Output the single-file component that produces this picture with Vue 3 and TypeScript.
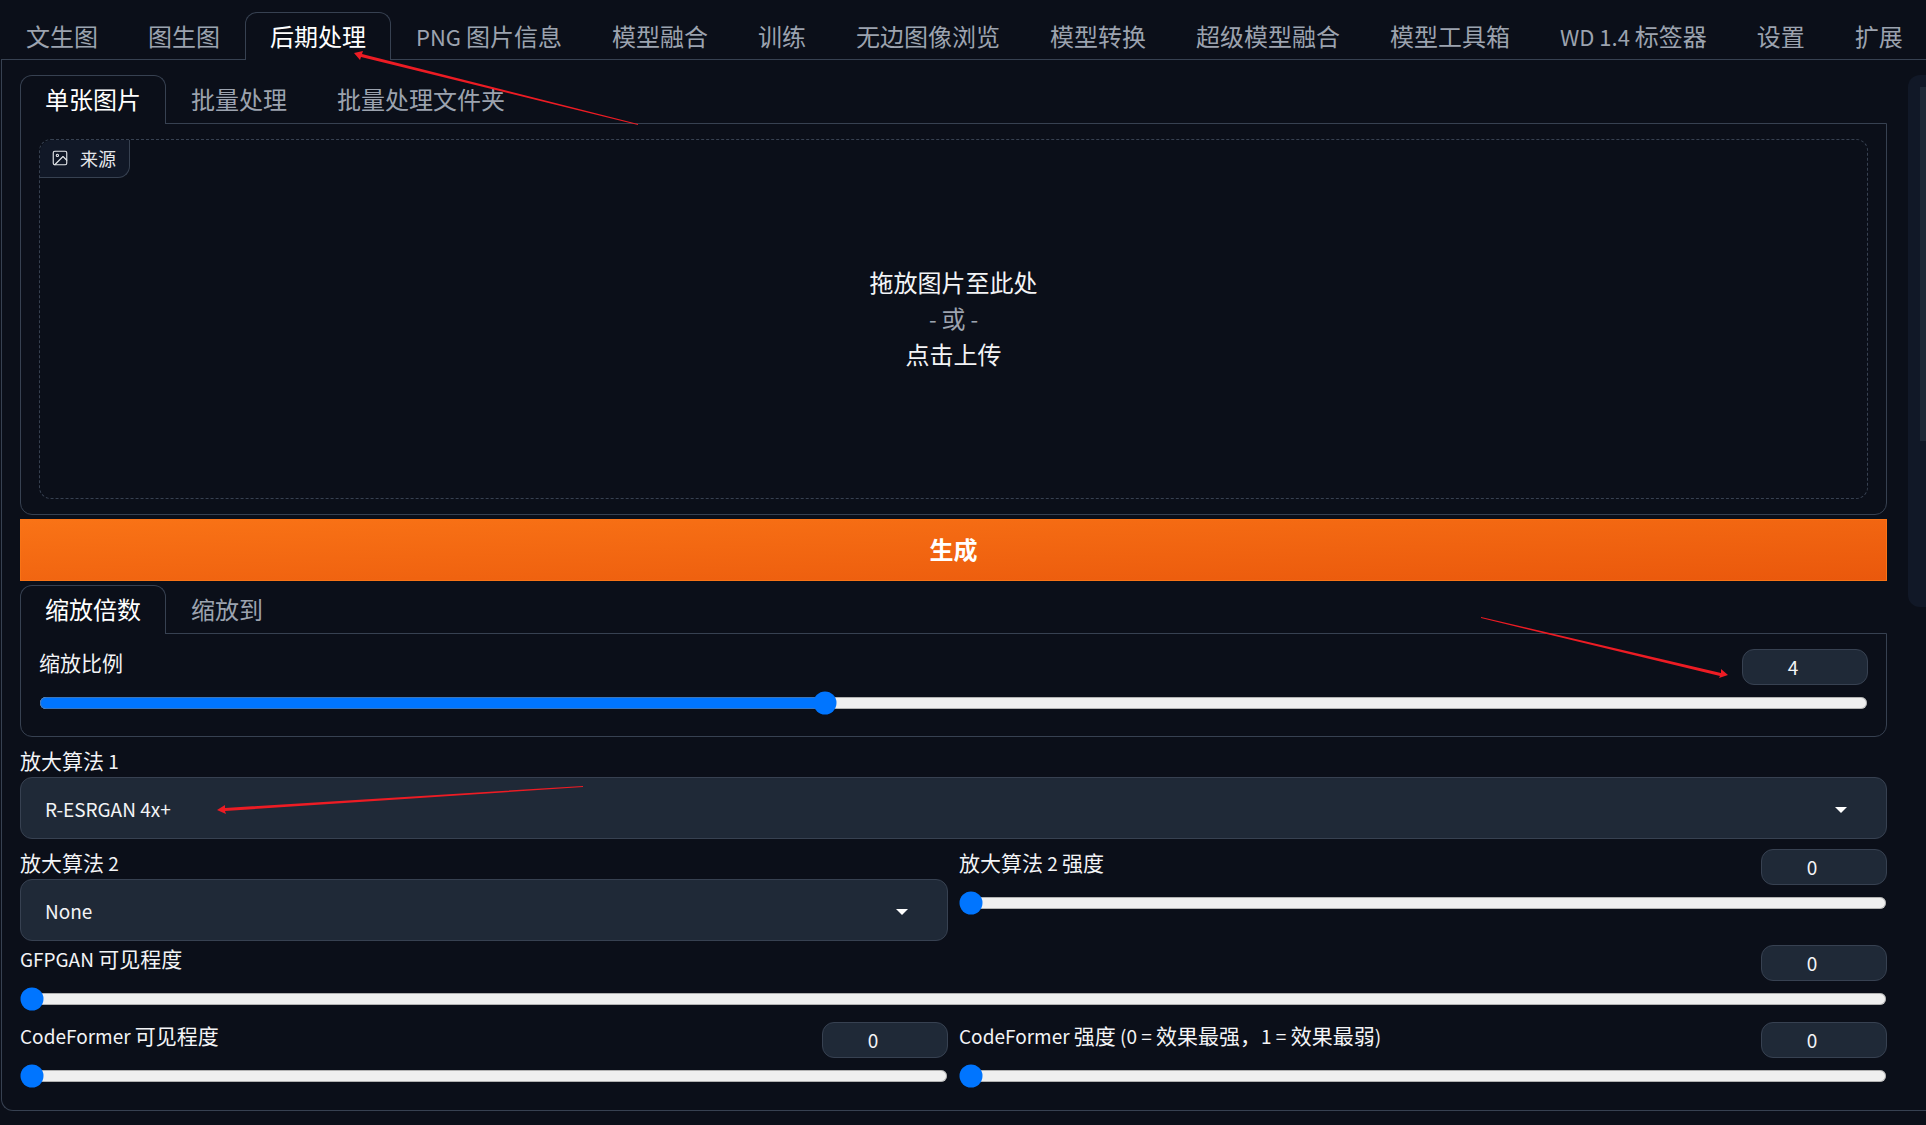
<script setup lang="ts">
import { ref } from 'vue'

interface Run {
  text: string
  latin: boolean
}

/* Splits a mixed caption so that Latin runs can be set a step smaller than the Chinese ones. */
function runs(text: string): Run[] {
  return text
    .split(/([\x20-\x7e]+)/)
    .filter((part) => part !== '')
    .map((part) => ({ text: part, latin: /^[\x20-\x7e]/.test(part) }))
}

const mainTabs = [
  '文生图', '图生图', '后期处理', 'PNG 图片信息', '模型融合', '训练', '无边图像浏览',
  '模型转换', '超级模型融合', '模型工具箱', 'WD 1.4 标签器', '设置', '扩展',
]
const sourceTabs = ['单张图片', '批量处理', '批量处理文件夹']
const scaleTabs = ['缩放倍数', '缩放到']

const mainTab = ref(2)
const sourceTab = ref(0)
const scaleTab = ref(0)

const scale = ref(4)
const upscalers = ['None', 'Lanczos', 'Nearest', 'R-ESRGAN 4x+']
const upscaler1 = ref('R-ESRGAN 4x+')
const upscaler2 = ref('None')
const upscaler2Strength = ref(0)
const gfpgan = ref(0)
const codeformer = ref(0)
const codeformerWeight = ref(0)
</script>

<template>
  <div class="page">
    <nav class="tabs tabs-main">
      <button
        v-for="(tab, i) in mainTabs"
        :key="tab"
        type="button"
        class="tab"
        :class="{ selected: i === mainTab }"
        @click="mainTab = i"
      ><span v-for="(r, k) in runs(tab)" :key="k" :class="{ latin: r.latin }">{{ r.text }}</span></button>
    </nav>

    <main class="panel-main">
      <div class="controls">
        <section>
          <div class="tabs">
            <button
              v-for="(tab, i) in sourceTabs"
              :key="tab"
              type="button"
              class="tab"
              :class="{ selected: i === sourceTab }"
              @click="sourceTab = i"
            >{{ tab }}</button>
          </div>
          <div class="box">
            <div class="dropzone">
              <div class="source-label">
                <svg viewBox="0 0 24 24" fill="none" stroke="currentColor" stroke-width="1.5" stroke-linecap="round" stroke-linejoin="round">
                  <rect x="3" y="3" width="18" height="18" rx="2" />
                  <circle cx="8.5" cy="8.5" r="1.5" />
                  <polyline points="21 15 16 10 5 21" />
                </svg>
                <span>来源</span>
              </div>
              <button type="button" class="upload">
                <span>拖放图片至此处</span>
                <span class="or"><span class="latin">- </span>或<span class="latin"> -</span></span>
                <span>点击上传</span>
              </button>
            </div>
          </div>
        </section>

        <button type="button" class="generate">生成</button>

        <section>
          <div class="tabs">
            <button
              v-for="(tab, i) in scaleTabs"
              :key="tab"
              type="button"
              class="tab"
              :class="{ selected: i === scaleTab }"
              @click="scaleTab = i"
            >{{ tab }}</button>
          </div>
          <div class="box box-scale">
            <div class="slider">
              <div class="slider-head">
                <label for="scale">缩放比例</label>
                <input v-model.number="scale" class="number" type="number" min="1" max="8" step="0.05" aria-label="缩放比例">
              </div>
              <input id="scale" v-model.number="scale" class="range" type="range" min="1" max="8" step="0.05">
            </div>
          </div>
        </section>

        <div class="row spaced">
          <div class="field">
            <label for="upscaler1">放大算法<span class="latin"> 1</span></label>
            <div class="select">
              <select id="upscaler1" v-model="upscaler1">
                <option v-for="u in upscalers" :key="u">{{ u }}</option>
              </select>
              <svg class="caret" viewBox="0 0 12 6"><path d="M0 0h12L6 6z" /></svg>
            </div>
          </div>
        </div>

        <div class="row spaced">
          <div class="field">
            <label for="upscaler2">放大算法<span class="latin"> 2</span></label>
            <div class="select">
              <select id="upscaler2" v-model="upscaler2">
                <option v-for="u in upscalers" :key="u">{{ u }}</option>
              </select>
              <svg class="caret" viewBox="0 0 12 6"><path d="M0 0h12L6 6z" /></svg>
            </div>
          </div>
          <div class="slider">
            <div class="slider-head">
              <label for="strength">放大算法<span class="latin"> 2 </span>强度</label>
              <input v-model.number="upscaler2Strength" class="number" type="number" min="0" max="1" step="0.001" aria-label="放大算法 2 强度">
            </div>
            <input id="strength" v-model.number="upscaler2Strength" class="range" type="range" min="0" max="1" step="0.001">
          </div>
        </div>

        <div class="row">
          <div class="slider">
            <div class="slider-head">
              <label for="gfpgan"><span class="latin">GFPGAN </span>可见程度</label>
              <input v-model.number="gfpgan" class="number" type="number" min="0" max="1" step="0.001" aria-label="GFPGAN 可见程度">
            </div>
            <input id="gfpgan" v-model.number="gfpgan" class="range" type="range" min="0" max="1" step="0.001">
          </div>
        </div>

        <div class="row">
          <div class="slider">
            <div class="slider-head">
              <label for="codeformer"><span class="latin">CodeFormer </span>可见程度</label>
              <input v-model.number="codeformer" class="number" type="number" min="0" max="1" step="0.001" aria-label="CodeFormer 可见程度">
            </div>
            <input id="codeformer" v-model.number="codeformer" class="range" type="range" min="0" max="1" step="0.001">
          </div>
          <div class="slider">
            <div class="slider-head">
              <label for="weight"><span
                v-for="(r, k) in runs('CodeFormer 强度 (0 = 效果最强，1 = 效果最弱)')"
                :key="k"
                :class="{ latin: r.latin }"
              >{{ r.text }}</span></label>
              <input v-model.number="codeformerWeight" class="number" type="number" min="0" max="1" step="0.001" aria-label="CodeFormer 强度">
            </div>
            <input id="weight" v-model.number="codeformerWeight" class="range" type="range" min="0" max="1" step="0.001">
          </div>
        </div>
      </div>

      <aside class="gallery"><div class="gallery-inner"></div></aside>
    </main>

    <svg class="arrows" viewBox="0 0 1926 1125" aria-hidden="true">
      <path d="M354 53L363 51L362 54L638 124L638 125L361 57L360 60Z" />
      <path d="M1728 675L1721 669L1721 673L1481 617L1481 618L1720 676L1719 678Z" />
      <path d="M217 810L225 805L225 808L583 786L583 787L225 811L226 814Z" />
    </svg>
  </div>
</template>

<style>
body {
  margin: 0;
  background: #0b0f19;
}
</style>

<style scoped>
.page {
  --line: #374151;
  --fill: #1f2937;
  --bg: #0b0f19;
  position: relative;
  box-sizing: border-box;
  min-height: 100vh;
  padding: 12px 0 15px 1px;
  overflow: hidden;
  background: var(--bg);
  color: #f3f4f6;
  font-family: "Noto Sans CJK SC", "Noto Sans", sans-serif;
  font-size: 21px;
  line-height: 30px;
}

.page *,
.page *::before {
  box-sizing: border-box;
}

button,
input,
select {
  margin: 0;
  color: inherit;
  font-family: inherit;
}

label {
  padding-bottom: 4px;
  line-height: 26px;
}

.latin {
  line-height: 1;
}

label .latin {
  font-size: 19px;
}

.tabs {
  display: flex;
}

.tab {
  flex: none;
  height: 49px;
  margin-bottom: -1px;
  padding: 0 24px 2px;
  border: 1px solid transparent;
  border-bottom: 0;
  border-radius: 12px 12px 0 0;
  background: none;
  color: #9ca3af;
  font-size: 24px;
  line-height: 36px;
  white-space: pre;
}

.tabs-main .tab {
  height: 48px;
}

.tab .latin,
.or .latin {
  font-size: 22px;
}

.tab.selected {
  z-index: 1;
  border-color: var(--line);
  background: var(--bg);
  color: #fff;
}

.panel-main {
  display: flex;
  align-items: flex-start;
  gap: 21px;
  padding: 15px 0 15px 18px;
  border: 1px solid var(--line);
  border-right: 0;
  border-radius: 0 0 0 12px;
}

.controls {
  display: flex;
  flex: 1;
  flex-direction: column;
  gap: 4px;
  min-width: 0;
}

.box {
  padding: 15px 18px;
  border: 1px solid var(--line);
  border-radius: 0 0 12px 12px;
}

.box-scale {
  padding-bottom: 14px;
}

.dropzone {
  display: flex;
  position: relative;
  height: 360px;
  border: 1px dashed var(--line);
  border-radius: 12px;
}

.source-label {
  display: flex;
  position: absolute;
  top: 0;
  left: 0;
  align-items: center;
  gap: 11px;
  height: 38px;
  padding: 0 13px 1px 11px;
  border: solid var(--line);
  border-width: 0 1px 1px 0;
  border-radius: 12px 0;
  background: #111827;
  color: #e5e7eb;
  font-size: 18px;
}

.source-label svg {
  width: 18px;
  height: 18px;
}

.upload {
  display: flex;
  flex: 1;
  flex-direction: column;
  align-items: center;
  justify-content: center;
  padding-bottom: 4px;
  border: 0;
  background: none;
  font-size: 24px;
  line-height: 36px;
}

.or {
  color: #9ca3af;
  white-space: pre;
}

.generate {
  height: 62px;
  padding-bottom: 3px;
  border: 1px solid #f97316;
  background: linear-gradient(to bottom right, #f97316, #ea580c);
  color: #fff;
  font-size: 24px;
  font-weight: 700;
  line-height: 36px;
}

.row {
  display: flex;
  align-items: flex-start;
  gap: 11px;
}

.row > * {
  flex: 1 1 0;
  min-width: 0;
}

.spaced {
  padding-top: 6px;
}

.field label {
  display: block;
  white-space: pre;
}

.select {
  position: relative;
}

.select select {
  display: block;
  width: 100%;
  height: 62px;
  padding: 0 60px 0 24px;
  border: 1px solid var(--line);
  border-radius: 12px;
  background: var(--fill);
  appearance: none;
  font-size: 19px;
}

.caret {
  position: absolute;
  top: 30px;
  right: 40px;
  width: 12px;
  height: 6px;
  fill: #fff;
  pointer-events: none;
}

.slider {
  padding-bottom: 7px;
}

.slider-head {
  display: flex;
  align-items: flex-start;
  justify-content: space-between;
  height: 36px;
  margin-bottom: 6px;
  white-space: pre;
}

.number {
  width: 126px;
  height: 36px;
  padding: 0 24px 1px 0;
  border: 1px solid var(--line);
  border-radius: 12px;
  background: var(--fill);
  appearance: textfield;
  font-size: 19px;
  text-align: center;
}

.number::-webkit-inner-spin-button {
  display: none;
}

/* The native slider, enlarged to a 24px thumb. */
.range {
  display: block;
  width: 100%;
  height: 16px;
  zoom: 1.5;
}

.gallery {
  flex: none;
  width: 18px;
  height: 532px;
  padding: 12px 0 0 12px;
  border-radius: 12px 0 0 12px;
  background: #111827;
}

.gallery-inner {
  height: 354px;
  background: var(--fill);
}

.arrows {
  position: absolute;
  top: 0;
  left: 0;
  z-index: 2;
  width: 100%;
  fill: #ed1c24;
  pointer-events: none;
}
</style>
